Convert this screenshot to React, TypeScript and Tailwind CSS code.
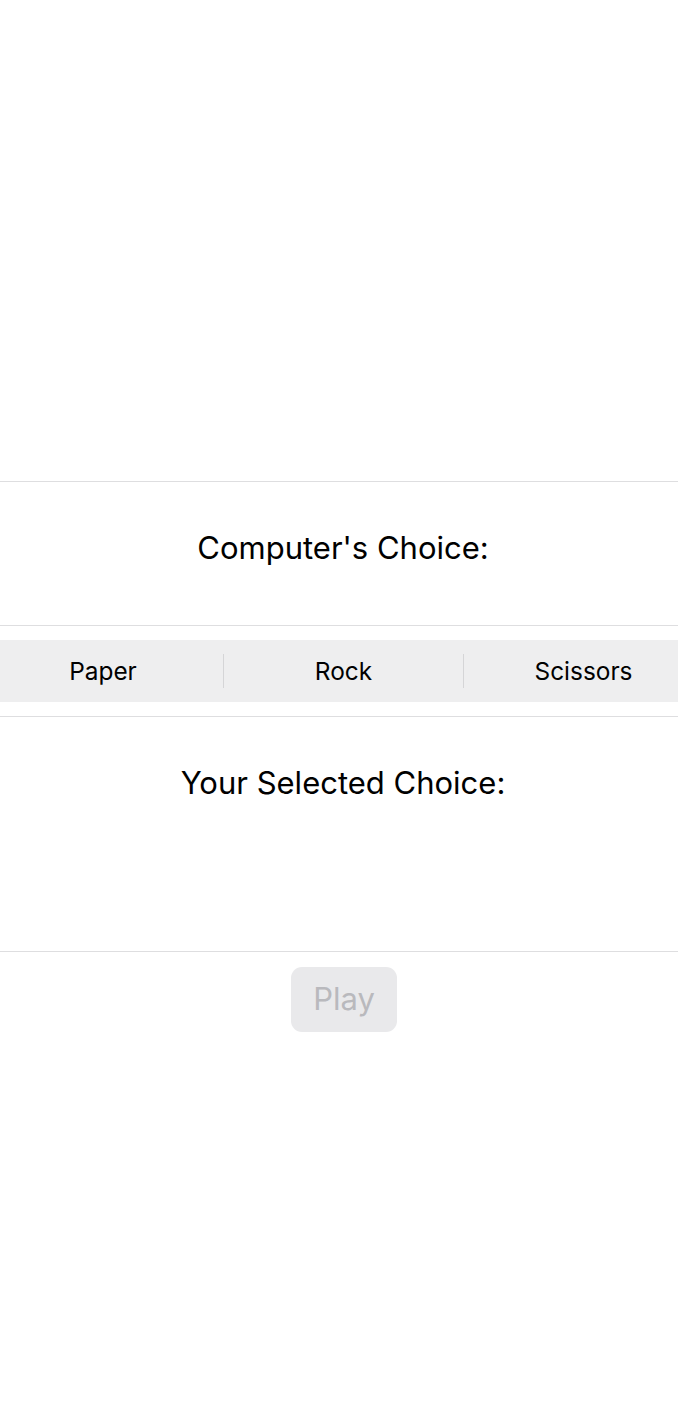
import { useState } from 'react';

type Choice = 'Paper' | 'Rock' | 'Scissors';

const CHOICES: Choice[] = ['Paper', 'Rock', 'Scissors'];

// ── Segmented picker ───────────────────────────────────────────────────────

function Segmented({
  value,
  onChange,
}: {
  value: Choice | null;
  onChange: (c: Choice) => void;
}) {
  return (
    <div className="flex h-[62px] items-center bg-[#eeeeef]">
      {CHOICES.map((c, i) => (
        <div key={c} className="flex flex-1 items-center h-full">
          {i > 0 && <span className="w-px h-[34px] bg-[#d5d5d7]" />}
          <button
            type="button"
            onClick={() => onChange(c)}
            className={
              'flex-1 h-full text-[24.4px] text-black ' + (value === c ? 'font-semibold' : '')
            }
          >
            {c}
          </button>
        </div>
      ))}
    </div>
  );
}

// ── App ────────────────────────────────────────────────────────────────────

export default function App() {
  const [picked, setPicked] = useState<Choice | null>(null);

  return (
    <div
      className="w-full min-h-[1420px] overflow-hidden bg-white text-black"
      style={{ fontFamily: 'Inter, "Noto Sans", sans-serif' }}
    >
      <div className="w-[720px] ml-[-17px]">
        <div className="h-[481px]" />

        {/* computer */}
        <section className="h-[144px] border-t border-[#dedee0] flex justify-center pt-[46px]">
          <h2 className="text-[31px] leading-[40px] font-normal">Computer's Choice:</h2>
        </section>

        {/* picker */}
        <div className="border-t border-[#dedee0] py-[14px]">
          <Segmented value={picked} onChange={setPicked} />
        </div>

        {/* player */}
        <section className="h-[235px] border-t border-[#dedee0] flex justify-center pt-[46px]">
          <h2 className="text-[31px] leading-[40px] font-normal">
            Your Selected Choice:{picked ? ` ${picked}` : ''}
          </h2>
        </section>

        <div className="border-t border-[#dedee0] flex justify-center pt-[15px] pl-[2px]">
          <button
            type="button"
            disabled={!picked}
            className="w-[106px] h-[65px] rounded-[11px] bg-[#e9e9eb] text-[31px] text-[#b9b9bd]"
          >
            Play
          </button>
        </div>
      </div>
    </div>
  );
}
